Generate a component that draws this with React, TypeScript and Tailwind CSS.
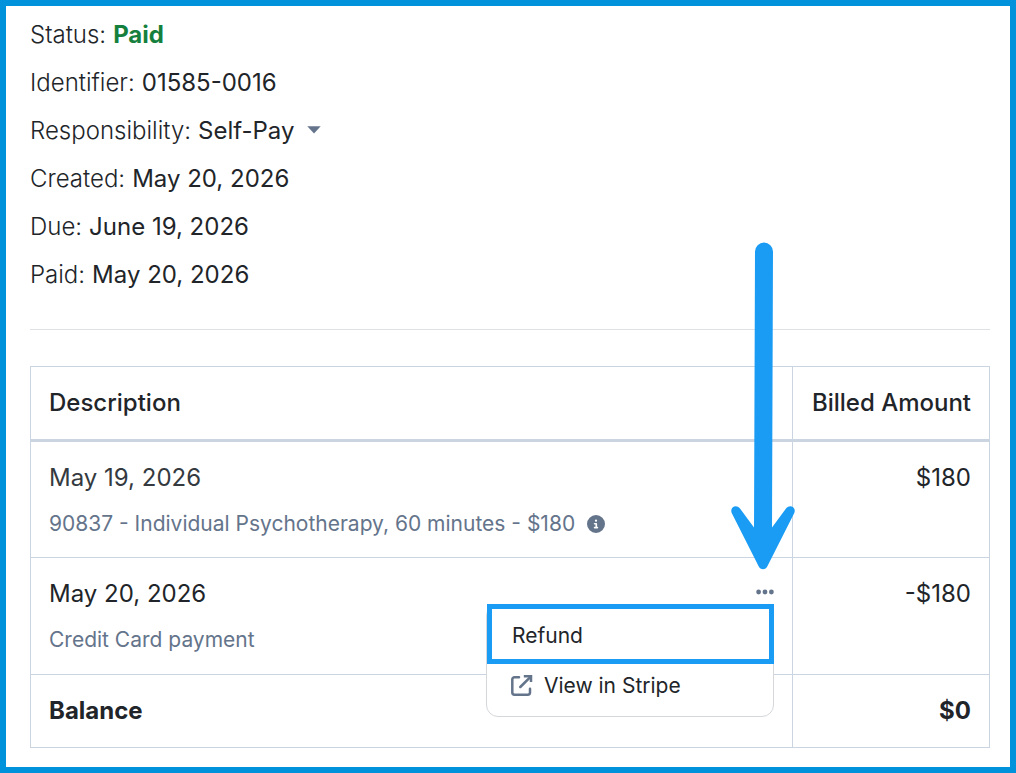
import type { ReactNode } from "react";

function DetailRow({ label, children }: { label: string; children: ReactNode }) {
  return (
    <div className="flex h-12 items-center gap-[7px]">
      <dt className="font-light">{label}:</dt>
      <dd>{children}</dd>
    </div>
  );
}

function InfoIcon() {
  return (
    <svg viewBox="0 0 512 512" className="size-[18px]" fill="#64748b" aria-hidden="true">
      <path d="M256 512A256 256 0 1 0 256 0a256 256 0 1 0 0 512zM216 336h24V272H216c-13.300 0-24-10.700-24-24s10.700-24 24-24h48c13.300 0 24 10.700 24 24v88h8c13.300 0 24 10.700 24 24s-10.700 24-24 24H216c-13.300 0-24-10.700-24-24s10.700-24 24-24zm40-208a32 32 0 1 1 0 64 32 32 0 1 1 0-64z" />
    </svg>
  );
}

function ExternalIcon() {
  return (
    <svg
      viewBox="0 0 22 22"
      className="size-[22px]"
      fill="none"
      stroke="#64748b"
      strokeWidth="2.5"
      strokeLinecap="round"
      strokeLinejoin="round"
      aria-hidden="true"
    >
      <path d="M8 2.300H3.500A2.200 2.200 0 0 0 1.300 4.500V17.500a2.200 2.200 0 0 0 2.200 2.200h13.300a2.200 2.200 0 0 0 2.200-2.200V13.800" />
      <path d="M9.300 12 19 2.300" />
      <path d="M12.800 1.300H20V7" strokeLinecap="butt" strokeLinejoin="miter" />
    </svg>
  );
}

function PointerArrow() {
  return (
    <svg
      viewBox="0 0 66 328"
      className="pointer-events-none absolute right-[-22px] bottom-[42px] h-[328px] w-[66px] max-w-none"
      fill="#1a9cf5"
      aria-hidden="true"
    >
      <path d="M25 9.500a9 9 0 0 1 18 0L42 290H24Z" />
      <path d="M24 285.500 10 266.500C6 261.500-.5 265.500 1.700 271L28.500 324C30.500 328.300 35.500 328.300 37.500 324L64.300 271C66.500 265.500 60 261.500 56 266.500L42 285.500Z" />
    </svg>
  );
}

function PaymentMenu() {
  return (
    <div className="relative flex">
      <button type="button" aria-label="Payment actions" className="flex h-[31px] w-[18px] items-center">
        <svg viewBox="0 0 18 6" className="h-[6px] w-[18px]" fill="#64748b" aria-hidden="true">
          <circle cx="2.600" cy="3" r="2.400" />
          <circle cx="9" cy="3" r="2.400" />
          <circle cx="15.400" cy="3" r="2.400" />
        </svg>
      </button>
      <PointerArrow />
      <div className="absolute top-7 right-0 z-10 w-72 rounded-xl border border-[#d5d7da] bg-white pb-2 text-[21px] font-normal">
        <button
          type="button"
          className="-mt-px -mr-px flex h-[60px] w-[287px] items-center border-5 border-[#1a9cf5] bg-white pt-1 pl-5"
        >
          Refund
        </button>
        <a href="#stripe" className="flex h-11 items-center gap-[11px] pl-6">
          <ExternalIcon />
          View in Stripe
        </a>
      </div>
    </div>
  );
}

export default function App() {
  const cell = "border border-[#cbd5e1] p-[18px] align-top";
  return (
    <main className="min-h-screen border-6 border-[#0093dc] bg-white pt-[5px] pr-5 pb-[19px] pl-6 font-['Inter',sans-serif] text-2xl leading-9 text-[#212529]">
      <dl>
        <DetailRow label="Status">
          <span className="font-bold text-[#15803d]">Paid</span>
        </DetailRow>
        <DetailRow label="Identifier">01585-0016</DetailRow>
        <div className="flex h-12 items-center gap-[7px]">
          <dt className="font-light">
            <label htmlFor="responsibility">Responsibility:</label>
          </dt>
          <dd className="relative">
            <select id="responsibility" className="appearance-none bg-transparent pr-[26px] outline-none">
              <option>Self-Pay</option>
            </select>
            <svg
              viewBox="0 0 14 8"
              className="pointer-events-none absolute top-[13px] right-0 h-2 w-3.5"
              fill="#64748b"
              aria-hidden="true"
            >
              <path d="M0.300 0.300h13.400L7 7.500Z" />
            </svg>
          </dd>
        </div>
        <DetailRow label="Created">May 20, 2026</DetailRow>
        <DetailRow label="Due">June 19, 2026</DetailRow>
        <DetailRow label="Paid">May 20, 2026</DetailRow>
      </dl>

      <hr className="mt-[30px] mb-9 border-[#dee2e6]" />

      <table className="w-full border-collapse">
        <thead>
          <tr>
            <th scope="col" className="border border-b-3 border-[#cbd5e1] p-[18px] text-left font-medium">
              Description
            </th>
            <th
              scope="col"
              className="w-[197px] border border-b-3 border-[#cbd5e1] p-[18px] text-right font-medium whitespace-nowrap"
            >
              Billed Amount
            </th>
          </tr>
        </thead>
        <tbody>
          <tr>
            <td className="border border-[#cbd5e1] p-[18px] pb-[17px] align-top">
              <div className="text-[#343a40]">May 19, 2026</div>
              <div className="mt-3 flex items-center gap-3 text-[21px] leading-8 text-[#64748b]">
                90837 - Individual Psychotherapy, 60 minutes - $180
                <InfoIcon />
              </div>
            </td>
            <td className={`${cell} text-right`}>$180</td>
          </tr>
          <tr>
            <td className={cell}>
              <div className="flex justify-between">
                May 20, 2026
                <PaymentMenu />
              </div>
              <div className="mt-3 text-[21px] leading-8 text-[#64748b]">Credit Card payment</div>
            </td>
            <td className={`${cell} text-right`}>-$180</td>
          </tr>
        </tbody>
        <tfoot>
          <tr className="font-bold">
            <th scope="row" className={`${cell} text-left`}>
              Balance
            </th>
            <td className={`${cell} text-right`}>$0</td>
          </tr>
        </tfoot>
      </table>
    </main>
  );
}
